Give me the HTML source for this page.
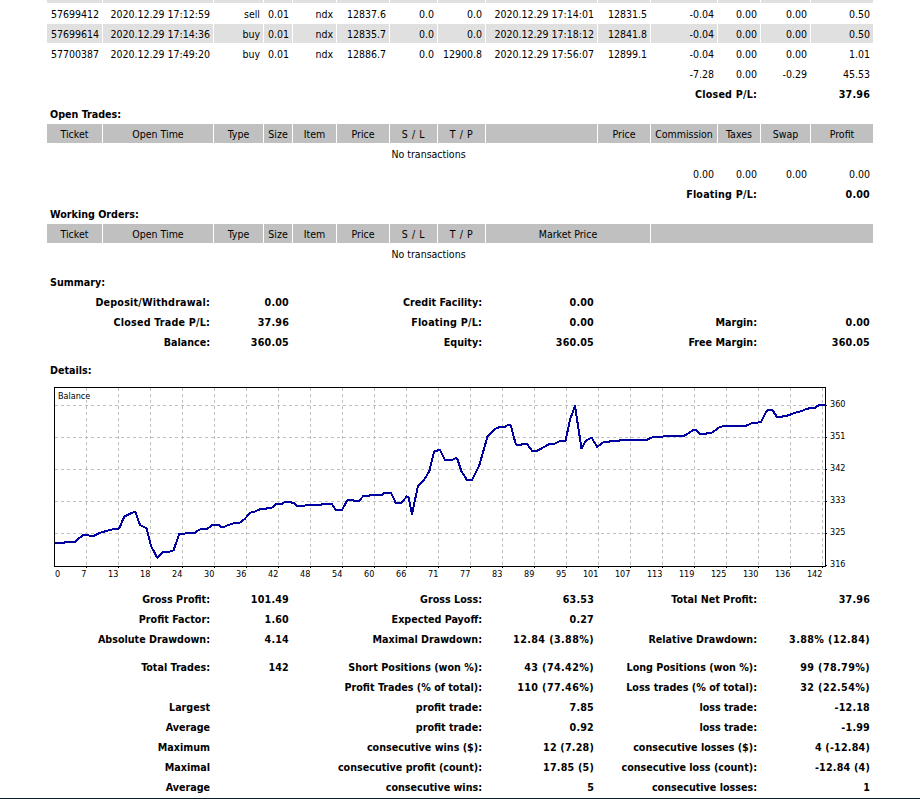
<!DOCTYPE html>
<html lang="en"><head><meta charset="utf-8"><title>Statement</title>
<style>
html,body{margin:0;padding:0;background:#fff;}
body{width:920px;height:799px;position:relative;overflow:hidden;font-family:"DejaVu Sans Condensed", "Liberation Sans", sans-serif;font-size:10.5px;color:#000;}
.c{position:absolute;height:19px;line-height:19px;white-space:nowrap;}
.r{text-align:right;}
.m{text-align:center;}
.b{font-weight:bold;font-size:10.67px;}
.w4{letter-spacing:0.4px;}
.w2{letter-spacing:0.2px;}
.w6{letter-spacing:0.6px;}
.g{background:#e0e0e0;}
.h{background:#c0c0c0;}
svg{position:absolute;left:0;top:0;}
svg text{font-family:"DejaVu Sans Condensed", "Liberation Sans", sans-serif;font-size:9px;fill:#000;}
</style></head><body>
<div class="c g" style="left:47px;top:-16px;width:55px;height:19px"></div>
<div class="c g" style="left:103px;top:-16px;width:110px;height:19px"></div>
<div class="c g" style="left:214px;top:-16px;width:49px;height:19px"></div>
<div class="c g" style="left:264px;top:-16px;width:28px;height:19px"></div>
<div class="c g" style="left:293px;top:-16px;width:43px;height:19px"></div>
<div class="c g" style="left:337px;top:-16px;width:52px;height:19px"></div>
<div class="c g" style="left:390px;top:-16px;width:47px;height:19px"></div>
<div class="c g" style="left:438px;top:-16px;width:47px;height:19px"></div>
<div class="c g" style="left:486px;top:-16px;width:111px;height:19px"></div>
<div class="c g" style="left:598px;top:-16px;width:52px;height:19px"></div>
<div class="c g" style="left:651px;top:-16px;width:66px;height:19px"></div>
<div class="c g" style="left:718px;top:-16px;width:42px;height:19px"></div>
<div class="c g" style="left:761px;top:-16px;width:49px;height:19px"></div>
<div class="c g" style="left:811px;top:-16px;width:62px;height:19px"></div>
<div class="c r" style="right:821px;top:5px">57699412</div>
<div class="c r" style="right:710px;top:5px">2020.12.29 17:12:59</div>
<div class="c r" style="right:660px;top:5px">sell</div>
<div class="c r" style="right:631px;top:5px">0.01</div>
<div class="c r" style="right:587px;top:5px">ndx</div>
<div class="c r" style="right:534px;top:5px">12837.6</div>
<div class="c r" style="right:486px;top:5px">0.0</div>
<div class="c r" style="right:438px;top:5px">0.0</div>
<div class="c r" style="right:326px;top:5px">2020.12.29 17:14:01</div>
<div class="c r" style="right:273px;top:5px">12831.5</div>
<div class="c r" style="right:206px;top:5px">-0.04</div>
<div class="c r" style="right:163px;top:5px">0.00</div>
<div class="c r" style="right:113px;top:5px">0.00</div>
<div class="c r" style="right:50px;top:5px">0.50</div>
<div class="c g" style="left:47px;top:24px;width:55px;height:19px"></div>
<div class="c g" style="left:103px;top:24px;width:110px;height:19px"></div>
<div class="c g" style="left:214px;top:24px;width:49px;height:19px"></div>
<div class="c g" style="left:264px;top:24px;width:28px;height:19px"></div>
<div class="c g" style="left:293px;top:24px;width:43px;height:19px"></div>
<div class="c g" style="left:337px;top:24px;width:52px;height:19px"></div>
<div class="c g" style="left:390px;top:24px;width:47px;height:19px"></div>
<div class="c g" style="left:438px;top:24px;width:47px;height:19px"></div>
<div class="c g" style="left:486px;top:24px;width:111px;height:19px"></div>
<div class="c g" style="left:598px;top:24px;width:52px;height:19px"></div>
<div class="c g" style="left:651px;top:24px;width:66px;height:19px"></div>
<div class="c g" style="left:718px;top:24px;width:42px;height:19px"></div>
<div class="c g" style="left:761px;top:24px;width:49px;height:19px"></div>
<div class="c g" style="left:811px;top:24px;width:62px;height:19px"></div>
<div class="c r" style="right:821px;top:25px">57699614</div>
<div class="c r" style="right:710px;top:25px">2020.12.29 17:14:36</div>
<div class="c r" style="right:660px;top:25px">buy</div>
<div class="c r" style="right:631px;top:25px">0.01</div>
<div class="c r" style="right:587px;top:25px">ndx</div>
<div class="c r" style="right:534px;top:25px">12835.7</div>
<div class="c r" style="right:486px;top:25px">0.0</div>
<div class="c r" style="right:438px;top:25px">0.0</div>
<div class="c r" style="right:326px;top:25px">2020.12.29 17:18:12</div>
<div class="c r" style="right:273px;top:25px">12841.8</div>
<div class="c r" style="right:206px;top:25px">-0.04</div>
<div class="c r" style="right:163px;top:25px">0.00</div>
<div class="c r" style="right:113px;top:25px">0.00</div>
<div class="c r" style="right:50px;top:25px">0.50</div>
<div class="c r" style="right:821px;top:45px">57700387</div>
<div class="c r" style="right:710px;top:45px">2020.12.29 17:49:20</div>
<div class="c r" style="right:660px;top:45px">buy</div>
<div class="c r" style="right:631px;top:45px">0.01</div>
<div class="c r" style="right:587px;top:45px">ndx</div>
<div class="c r" style="right:534px;top:45px">12886.7</div>
<div class="c r" style="right:486px;top:45px">0.0</div>
<div class="c r" style="right:438px;top:45px">12900.8</div>
<div class="c r" style="right:326px;top:45px">2020.12.29 17:56:07</div>
<div class="c r" style="right:273px;top:45px">12899.1</div>
<div class="c r" style="right:206px;top:45px">-0.04</div>
<div class="c r" style="right:163px;top:45px">0.00</div>
<div class="c r" style="right:113px;top:45px">0.00</div>
<div class="c r" style="right:50px;top:45px">1.01</div>
<div class="c r" style="right:206px;top:65px">-7.28</div>
<div class="c r" style="right:163px;top:65px">0.00</div>
<div class="c r" style="right:113px;top:65px">-0.29</div>
<div class="c r" style="right:50px;top:65px">45.53</div>
<div class="c r b w2" style="right:163px;top:85px">Closed P/L:</div>
<div class="c r b w2" style="right:50px;top:85px">37.96</div>
<div class="c b" style="left:50px;top:105px">Open Trades:</div>
<div class="c h" style="left:47px;top:124px;width:55px;height:19px"></div>
<div class="c h" style="left:103px;top:124px;width:110px;height:19px"></div>
<div class="c h" style="left:214px;top:124px;width:49px;height:19px"></div>
<div class="c h" style="left:264px;top:124px;width:28px;height:19px"></div>
<div class="c h" style="left:293px;top:124px;width:43px;height:19px"></div>
<div class="c h" style="left:337px;top:124px;width:52px;height:19px"></div>
<div class="c h" style="left:390px;top:124px;width:47px;height:19px"></div>
<div class="c h" style="left:438px;top:124px;width:47px;height:19px"></div>
<div class="c h" style="left:486px;top:124px;width:111px;height:19px"></div>
<div class="c h" style="left:598px;top:124px;width:52px;height:19px"></div>
<div class="c h" style="left:651px;top:124px;width:66px;height:19px"></div>
<div class="c h" style="left:718px;top:124px;width:42px;height:19px"></div>
<div class="c h" style="left:761px;top:124px;width:49px;height:19px"></div>
<div class="c h" style="left:811px;top:124px;width:62px;height:19px"></div>
<div class="c m" style="left:47px;top:125px;width:55px">Ticket</div>
<div class="c m" style="left:103px;top:125px;width:110px">Open Time</div>
<div class="c m" style="left:214px;top:125px;width:49px">Type</div>
<div class="c m" style="left:264px;top:125px;width:28px">Size</div>
<div class="c m" style="left:293px;top:125px;width:43px">Item</div>
<div class="c m" style="left:337px;top:125px;width:52px">Price</div>
<div class="c m w6" style="left:390px;top:125px;width:47px">S / L</div>
<div class="c m w6" style="left:438px;top:125px;width:47px">T / P</div>
<div class="c m" style="left:598px;top:125px;width:52px">Price</div>
<div class="c m" style="left:651px;top:125px;width:66px">Commission</div>
<div class="c m" style="left:718px;top:125px;width:42px">Taxes</div>
<div class="c m" style="left:761px;top:125px;width:49px">Swap</div>
<div class="c m" style="left:811px;top:125px;width:62px">Profit</div>
<div class="c m" style="left:47px;top:145px;width:763px">No transactions</div>
<div class="c r" style="right:206px;top:165px">0.00</div>
<div class="c r" style="right:163px;top:165px">0.00</div>
<div class="c r" style="right:113px;top:165px">0.00</div>
<div class="c r" style="right:50px;top:165px">0.00</div>
<div class="c r b w2" style="right:163px;top:185px">Floating P/L:</div>
<div class="c r b w2" style="right:50px;top:185px">0.00</div>
<div class="c b" style="left:50px;top:205px">Working Orders:</div>
<div class="c h" style="left:47px;top:224px;width:55px;height:19px"></div>
<div class="c h" style="left:103px;top:224px;width:110px;height:19px"></div>
<div class="c h" style="left:214px;top:224px;width:49px;height:19px"></div>
<div class="c h" style="left:264px;top:224px;width:28px;height:19px"></div>
<div class="c h" style="left:293px;top:224px;width:43px;height:19px"></div>
<div class="c h" style="left:337px;top:224px;width:52px;height:19px"></div>
<div class="c h" style="left:390px;top:224px;width:47px;height:19px"></div>
<div class="c h" style="left:438px;top:224px;width:47px;height:19px"></div>
<div class="c h" style="left:486px;top:224px;width:164px;height:19px"></div>
<div class="c h" style="left:651px;top:224px;width:222px;height:19px"></div>
<div class="c m" style="left:47px;top:225px;width:55px">Ticket</div>
<div class="c m" style="left:103px;top:225px;width:110px">Open Time</div>
<div class="c m" style="left:214px;top:225px;width:49px">Type</div>
<div class="c m" style="left:264px;top:225px;width:28px">Size</div>
<div class="c m" style="left:293px;top:225px;width:43px">Item</div>
<div class="c m" style="left:337px;top:225px;width:52px">Price</div>
<div class="c m w6" style="left:390px;top:225px;width:47px">S / L</div>
<div class="c m w6" style="left:438px;top:225px;width:47px">T / P</div>
<div class="c m" style="left:486px;top:225px;width:164px">Market Price</div>
<div class="c m" style="left:47px;top:245px;width:763px">No transactions</div>
<div class="c b" style="left:50px;top:273px">Summary:</div>
<div class="c r b w2" style="right:710px;top:293px">Deposit/Withdrawal:</div>
<div class="c r b w2" style="right:631px;top:293px">0.00</div>
<div class="c r b" style="right:438px;top:293px">Credit Facility:</div>
<div class="c r b w2" style="right:326px;top:293px">0.00</div>
<div class="c r b w2" style="right:710px;top:313px">Closed Trade P/L:</div>
<div class="c r b w2" style="right:631px;top:313px">37.96</div>
<div class="c r b w2" style="right:438px;top:313px">Floating P/L:</div>
<div class="c r b w2" style="right:326px;top:313px">0.00</div>
<div class="c r b" style="right:163px;top:313px">Margin:</div>
<div class="c r b w2" style="right:50px;top:313px">0.00</div>
<div class="c r b" style="right:710px;top:333px">Balance:</div>
<div class="c r b w2" style="right:631px;top:333px">360.05</div>
<div class="c r b" style="right:438px;top:333px">Equity:</div>
<div class="c r b w2" style="right:326px;top:333px">360.05</div>
<div class="c r b" style="right:163px;top:333px">Free Margin:</div>
<div class="c r b w2" style="right:50px;top:333px">360.05</div>
<div class="c b" style="left:50px;top:361px">Details:</div>
<svg width="920" height="799" viewBox="0 0 920 799">
<g shape-rendering="crispEdges" fill="none">
<path d="M86.5 388V566M118.5 388V566M150.5 388V566M182.5 388V566M214.5 388V566M246.5 388V566M278.5 388V566M310.5 388V566M342.5 388V566M374.5 388V566M406.5 388V566M438.5 388V566M470.5 388V566M502.5 388V566M534.5 388V566M566.5 388V566M598.5 388V566M630.5 388V566M662.5 388V566M694.5 388V566M726.5 388V566M758.5 388V566M790.5 388V566M822.5 388V566M55 405.5H825M55 437.5H825M55 469.5H825M55 501.5H825M55 533.5H825" stroke="#c0c0c0" stroke-width="1" stroke-dasharray="3 3"/>
<path d="M86.5 567v1M118.5 567v1M150.5 567v1M182.5 567v1M214.5 567v1M246.5 567v1M278.5 567v1M310.5 567v1M342.5 567v1M374.5 567v1M406.5 567v1M438.5 567v1M470.5 567v1M502.5 567v1M534.5 567v1M566.5 567v1M598.5 567v1M630.5 567v1M662.5 567v1M694.5 567v1M726.5 567v1M758.5 567v1M790.5 567v1M822.5 567v1M826 405.5h1M826 437.5h1M826 469.5h1M826 501.5h1M826 533.5h1M826 565.5h1" stroke="#000" stroke-width="1"/>
<rect x="54.5" y="387.5" width="771" height="179" stroke="#000" stroke-width="1"/>
<polyline points="54.5,542.8 64.3,542.8 65.6,541.9 74.8,541.9 82.6,535.4 87.8,535.0 90.4,535.9 94.3,535.6 99.6,533.0 108.7,530.2 113.9,529.1 119.1,528.6 124.3,516.5 133.5,512.2 135.4,512.2 140.0,525.0 146.5,528.1 151.1,546.1 157.2,557.8 163.0,551.7 169.6,551.7 173.5,550.4 179.3,533.7 184.6,533.7 185.9,532.8 195.0,532.8 198.9,529.8 202.2,528.9 207.4,528.8 212.0,525.0 219.1,525.0 221.1,527.0 224.3,526.7 230.9,524.1 234.8,523.0 240.0,522.5 245.2,518.5 249.8,512.9 254.3,511.7 260.9,509.0 265.9,508.9 266.5,508.0 271.7,507.7 276.3,504.1 282.2,503.8 284.8,502.0 290.0,502.0 293.9,503.3 297.2,505.9 304.3,505.9 305.6,505.0 320.6,505.0 322.0,504.0 331.7,504.0 335.9,509.8 342.2,509.8 346.7,501.1 348.7,499.8 352.6,499.8 353.9,500.8 359.1,500.8 363.7,495.6 369.6,495.6 370.9,494.8 382.4,494.8 383.7,492.8 390.9,492.8 395.8,502.9 401.3,502.9 406.9,496.3 408.5,497.4 412.0,514.1 418.0,485.7 424.1,479.8 429.3,471.3 434.2,451.5 439.8,449.8 445.0,459.8 452.2,459.8 456.1,458.0 457.6,459.6 461.3,471.0 466.8,479.8 472.1,479.8 479.1,466.1 487.6,436.1 495.4,428.7 500.0,427.0 505.2,426.7 507.8,425.0 510.7,425.3 515.9,444.6 521.5,444.6 522.2,443.9 527.0,443.9 532.0,450.8 537.2,450.8 548.9,444.3 554.1,443.9 560.0,441.0 565.5,440.7 570.2,419.1 575.0,406.1 581.5,448.5 586.1,440.4 591.7,437.8 597.2,446.9 603.8,442.0 609.0,442.0 610.0,441.0 619.4,441.0 620.4,440.0 646.5,440.0 653.0,437.0 662.8,436.7 664.1,436.1 684.3,435.8 693.5,429.8 696.1,429.8 699.9,433.8 706.0,433.8 706.7,433.1 711.3,433.1 719.7,427.0 724.2,425.9 745.5,425.9 753.2,422.7 760.8,422.4 766.4,411.0 769.1,409.8 772.2,409.8 776.7,416.6 782.1,416.6 783.6,415.9 787.4,415.6 795.0,412.8 799.6,411.8 807.2,408.7 811.7,408.0 815.5,407.5 819.0,404.9 826.0,404.9" stroke="#0000a0" stroke-width="2" stroke-linejoin="round"/>
</g>
<text x="58" y="399">Balance</text>
<text x="830" y="407">360</text>
<text x="830" y="439">351</text>
<text x="830" y="471">342</text>
<text x="830" y="503">333</text>
<text x="830" y="535">325</text>
<text x="830" y="567">316</text>
<text x="55" y="577">0</text>
<text x="86.4" y="577" text-anchor="end">7</text>
<text x="118.4" y="577" text-anchor="end">13</text>
<text x="150.4" y="577" text-anchor="end">18</text>
<text x="182.4" y="577" text-anchor="end">24</text>
<text x="214.4" y="577" text-anchor="end">30</text>
<text x="246.4" y="577" text-anchor="end">36</text>
<text x="278.4" y="577" text-anchor="end">42</text>
<text x="310.4" y="577" text-anchor="end">48</text>
<text x="342.4" y="577" text-anchor="end">54</text>
<text x="374.4" y="577" text-anchor="end">60</text>
<text x="406.4" y="577" text-anchor="end">66</text>
<text x="438.4" y="577" text-anchor="end">71</text>
<text x="470.4" y="577" text-anchor="end">77</text>
<text x="502.4" y="577" text-anchor="end">83</text>
<text x="534.4" y="577" text-anchor="end">89</text>
<text x="566.4" y="577" text-anchor="end">95</text>
<text x="598.4" y="577" text-anchor="end">101</text>
<text x="630.4" y="577" text-anchor="end">107</text>
<text x="662.4" y="577" text-anchor="end">113</text>
<text x="694.4" y="577" text-anchor="end">119</text>
<text x="726.4" y="577" text-anchor="end">125</text>
<text x="758.4" y="577" text-anchor="end">130</text>
<text x="790.4" y="577" text-anchor="end">136</text>
<text x="822.4" y="577" text-anchor="end">142</text>
</svg>
<div class="c r b" style="right:710px;top:590px">Gross Profit:</div>
<div class="c r b w2" style="right:631px;top:590px">101.49</div>
<div class="c r b" style="right:438px;top:590px">Gross Loss:</div>
<div class="c r b w2" style="right:326px;top:590px">63.53</div>
<div class="c r b" style="right:163px;top:590px">Total Net Profit:</div>
<div class="c r b w2" style="right:50px;top:590px">37.96</div>
<div class="c r b" style="right:710px;top:610px">Profit Factor:</div>
<div class="c r b w2" style="right:631px;top:610px">1.60</div>
<div class="c r b" style="right:438px;top:610px">Expected Payoff:</div>
<div class="c r b w2" style="right:326px;top:610px">0.27</div>
<div class="c r b" style="right:710px;top:630px">Absolute Drawdown:</div>
<div class="c r b w2" style="right:631px;top:630px">4.14</div>
<div class="c r b" style="right:438px;top:630px">Maximal Drawdown:</div>
<div class="c r b w4" style="right:326px;top:630px">12.84 (3.88%)</div>
<div class="c r b" style="right:163px;top:630px">Relative Drawdown:</div>
<div class="c r b w4" style="right:50px;top:630px">3.88% (12.84)</div>
<div class="c r b" style="right:710px;top:658px">Total Trades:</div>
<div class="c r b w2" style="right:631px;top:658px">142</div>
<div class="c r b" style="right:438px;top:658px">Short Positions (won %):</div>
<div class="c r b w4" style="right:326px;top:658px">43 (74.42%)</div>
<div class="c r b" style="right:163px;top:658px">Long Positions (won %):</div>
<div class="c r b w4" style="right:50px;top:658px">99 (78.79%)</div>
<div class="c r b" style="right:438px;top:678px">Profit Trades (% of total):</div>
<div class="c r b w4" style="right:326px;top:678px">110 (77.46%)</div>
<div class="c r b" style="right:163px;top:678px">Loss trades (% of total):</div>
<div class="c r b w4" style="right:50px;top:678px">32 (22.54%)</div>
<div class="c r b" style="right:710px;top:698px">Largest</div>
<div class="c r b" style="right:438px;top:698px">profit trade:</div>
<div class="c r b w2" style="right:326px;top:698px">7.85</div>
<div class="c r b" style="right:163px;top:698px">loss trade:</div>
<div class="c r b w2" style="right:50px;top:698px">-12.18</div>
<div class="c r b" style="right:710px;top:718px">Average</div>
<div class="c r b" style="right:438px;top:718px">profit trade:</div>
<div class="c r b w2" style="right:326px;top:718px">0.92</div>
<div class="c r b" style="right:163px;top:718px">loss trade:</div>
<div class="c r b w2" style="right:50px;top:718px">-1.99</div>
<div class="c r b" style="right:710px;top:738px">Maximum</div>
<div class="c r b" style="right:438px;top:738px">consecutive wins ($):</div>
<div class="c r b w2" style="right:326px;top:738px">12 (7.28)</div>
<div class="c r b" style="right:163px;top:738px">consecutive losses ($):</div>
<div class="c r b w2" style="right:50px;top:738px">4 (-12.84)</div>
<div class="c r b" style="right:710px;top:758px">Maximal</div>
<div class="c r b" style="right:438px;top:758px">consecutive profit (count):</div>
<div class="c r b w2" style="right:326px;top:758px">17.85 (5)</div>
<div class="c r b" style="right:163px;top:758px">consecutive loss (count):</div>
<div class="c r b w2" style="right:50px;top:758px">-12.84 (4)</div>
<div class="c r b" style="right:710px;top:778px">Average</div>
<div class="c r b" style="right:438px;top:778px">consecutive wins:</div>
<div class="c r b w2" style="right:326px;top:778px">5</div>
<div class="c r b" style="right:163px;top:778px">consecutive losses:</div>
<div class="c r b w2" style="right:50px;top:778px">1</div>
<div style="position:absolute;left:0;top:798px;width:920px;height:1px;background:#0c1d29"></div>
</body></html>
